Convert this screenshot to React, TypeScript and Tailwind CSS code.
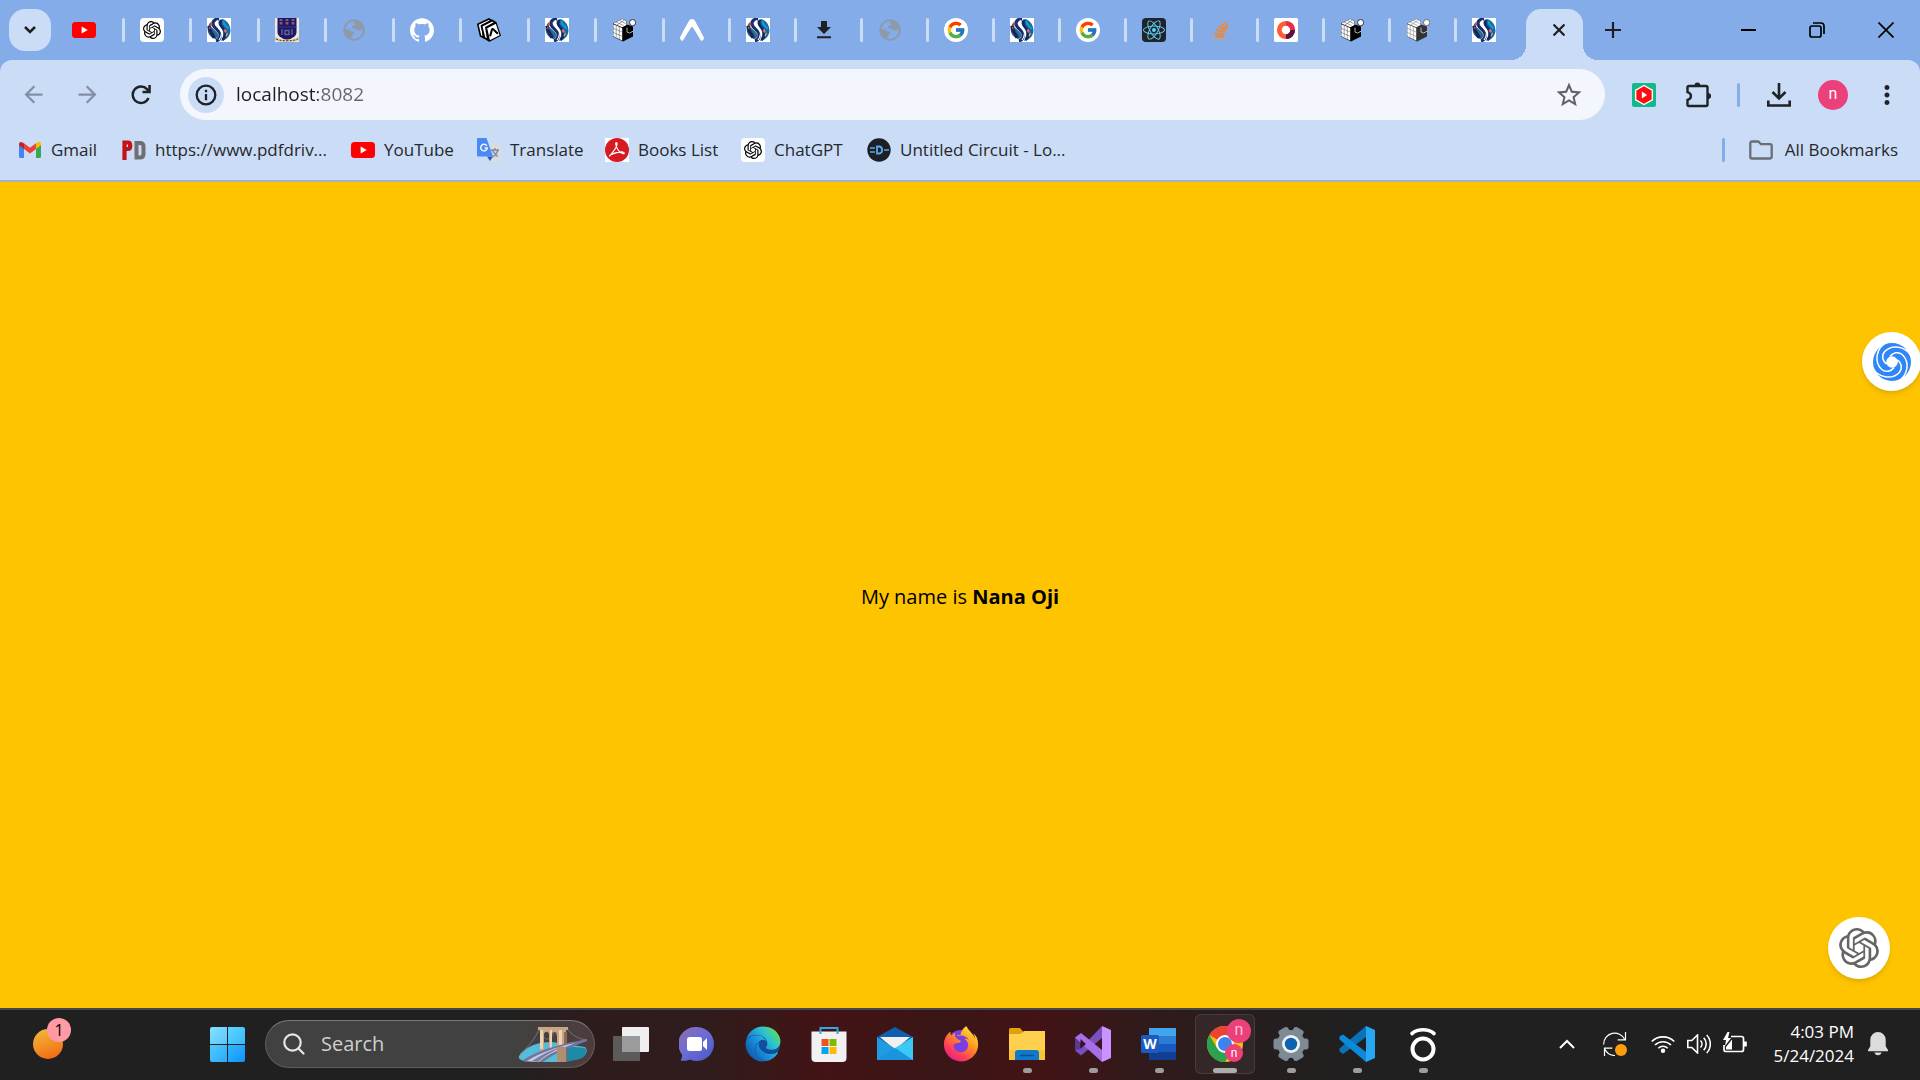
import React from "react";
import { MdArrowBack, MdArrowForward, MdStarBorder, MdMoreVert } from "react-icons/md";
import { SiOpenai, SiGithub, SiExpo } from "react-icons/si";
import { FcGoogle } from "react-icons/fc";
import { FaReact, FaEdge, FaFirefoxBrowser } from "react-icons/fa";

/* ---------- site icons ---------- */

const YouTube = () => (
  <svg viewBox="0 0 24 24" className="size-6" aria-hidden="true">
    <rect x="0" y="4" width="24" height="16" rx="3.500" fill="#ff0000" />
    <path d="M9.600 8.400v7.200l6.200-3.600z" fill="#fff" />
  </svg>
);

const ChatGpt = () => (
  <span className="flex size-6 items-center justify-center rounded bg-white text-black">
    <SiOpenai className="size-[18px]" />
  </span>
);

const Swirl = () => (
  <svg viewBox="0 0 24 24" className="size-6" aria-hidden="true">
    <rect width="24" height="24" fill="#fff" />
    <path d="M13 1C6 0 3 4 4 8c1 3 6 5 7 8s-1 5-3 5C3 19 0 15 .8 10 1.500 5 6 .8 13 1z" fill="#1f6f8f" />
    <path d="M12 1C7 1 5 4 6.500 7.500c1.200 3 6 5 6.500 8.500.4 3-1 6-4 7" fill="none" stroke="#1b2b6b" strokeWidth="3.200" />
    <path d="M2 8c0 6 4 7 5 12" fill="none" stroke="#1b2460" strokeWidth="3.400" />
    <path d="M15 1C10 3 11 6 13.500 9c3 3.500 4 8 .5 14 5-.6 9-4.500 9.500-10C23.500 7 20 2 15 1z" fill="#1268a8" />
    <path d="M14 2c-2 4 0 6 2.500 9s2 8-1 11" fill="none" stroke="#16245f" strokeWidth="2.600" />
    <path d="M17 3c-1.500 3 3 5 4.500 8" fill="none" stroke="#1b9ac0" strokeWidth="2.200" />
    <path d="M10.500 2C8 6 10 8 12.500 11s2.500 7-.5 11" fill="none" stroke="#fff" strokeWidth="1.100" />
    <path d="M3 5.500l2 1.500M2 9.500l1.500 1" stroke="#e0402e" strokeWidth="1.600" />
    <path d="M17.500 11.500l1.500 3" stroke="#ee6a75" strokeWidth="2.200" />
    <path d="M20.500 15l-1.500 3" stroke="#f0b43a" strokeWidth="1.200" />
  </svg>
);

const Crest = () => (
  <svg viewBox="0 0 24 24" className="size-6" aria-hidden="true">
    <rect width="24" height="24" fill="#efe9dc" />
    <path d="M2.500 0h19v14c0 4-4 6.500-9.500 8-5.500-1.500-9.500-4-9.500-8z" fill="#1c1664" />
    <path d="M2.500 9h19" stroke="#3d3590" strokeWidth="1" />
    <path d="M7 11v6M17 11v6M10 12.500h4v4h-4z" stroke="#6a6490" strokeWidth="1.400" fill="none" />
    <path d="M6 1v5.500M12 1v5.500M18 1v5.500" stroke="#8d5a63" strokeWidth="2.800" />
    <path d="M4.500 3.500h3M10.500 3.500h3M16.500 3.500h3" stroke="#1c1664" strokeWidth="1" />
    <path d="M0 18.500c4 3 8 3 12 3s8 0 12-3v3.500c-4 2-8 2-12 2s-8 0-12-2z" fill="#dccba5" />
    <path d="M1 21c4 1.700 7 1.700 11 1.700s7 0 11-1.700" stroke="#4b3324" strokeWidth="1" fill="none" strokeDasharray="2 1.500" />
  </svg>
);

const Snack = () => (
  <svg viewBox="0 0 24 24" className="size-6" aria-hidden="true">
    <path d="M.8 6.200L12 1l2.500 1.500L5 7.500l1.500 12L3.500 18z" fill="#fff" stroke="#000" strokeWidth="1.600" />
    <path d="M4.500 8L15.500 2.500l2.700 2L9 9.500l2 12.500-3.500-2z" fill="#fff" stroke="#000" strokeWidth="1.800" />
    <path d="M9.500 10l9.700-5L23.300 17.500 12.500 23z" fill="#fff" stroke="#000" strokeWidth="1.200" />
    <path d="M13.300 17.500l1.700-6c.2-.7.8-.8 1.300-.3l4 4" fill="none" stroke="#000" strokeWidth="2" strokeLinecap="round" />
  </svg>
);

const Cube = ({ faded = false }: { faded?: boolean }) => (
  <svg viewBox="0 0 24 24" className="size-6" aria-hidden="true">
    <path d="M10.500.8l4.500 2.200v3.500l6 2v10l-10 5-10-5v-13z" fill={faded ? "#333" : "#000"} />
    <path d="M1.300 6.200l8.900 3.900v12.400L1.300 18.200z" fill="#fff" />
    <path d="M1.300 5.400l9-4.300 4.200 2v4l-4.200 2.200z" fill="#fff" />
    <path d="M1 10.200l9.500 4M1 14.300l9.500 4.200M4.200 7v12.500M7.300 8.500v12.700M4 4l7.500 3.500M7.500 2.500l6 3M5 7l7.500-5" stroke={faded ? "#888" : "#666"} strokeWidth=".6" fill="none" />
    <path d="M15 9.500v4.500l2.500 1 4-2" stroke="#ddd" strokeWidth=".8" fill="none" />
    <circle cx="20.600" cy="4.600" r="3.100" fill="#fff" stroke={faded ? "#555" : "#111"} strokeWidth=".8" />
  </svg>
);

const Globe = () => (
  <svg viewBox="0 0 24 24" className="size-6" aria-hidden="true">
    <circle cx="12" cy="12" r="9.800" fill="none" stroke="#8f99a8" strokeWidth="1.800" />
    <path d="M12.500 2.500C11 4 11.500 5.500 13.500 6c-1 1.500-2 1.800-3.500 2 .5 2 1 2.800 3 3 1.500 0 3 .5 3.300 2 1.200-.4 3-.6 5.200-2C21 6 17 2.500 12.500 2.500zM2.500 11c3 0 5.500.8 7 2.500 1.500 0 3 1 2.500 2.500-1.500.5-2.500 1.500-3 4.500C5 19 2.300 15.500 2.500 11z" fill="#8f99a8" />
  </svg>
);

const DownloadPage = () => (
  <svg viewBox="0 0 24 24" className="size-6" aria-hidden="true">
    <path d="M9 3h6v6h4l-7 7-7-7h4zM5 18.300h14v2H5z" fill="#202124" />
  </svg>
);

const Google = () => (
  <span className="flex size-6 items-center justify-center rounded-full bg-white">
    <FcGoogle className="size-5" />
  </span>
);

const ReactTile = () => (
  <span className="flex size-6 items-center justify-center rounded-sm bg-[#20232a] text-[#5ed3f3]">
    <FaReact className="size-[22px]" />
  </span>
);

const Stack = () => (
  <svg viewBox="0 0 24 24" className="size-6" fill="none" aria-hidden="true">
    <path d="M4.700 15v6h13.500v-6" stroke="#a9a9ae" strokeWidth="1.300" />
    <path d="M7 18.500h9M7.200 15.500l9 .8M8.200 11.900l8.500 2.300M10.300 8.200l7.300 4.300M13.300 5.300l5 6.200M17.300 3.500l2.200 7" stroke="#f5852f" strokeWidth="1.800" />
  </svg>
);

const Ring = () => (
  <svg viewBox="0 0 24 24" className="size-6" aria-hidden="true">
    <rect width="24" height="24" rx="1.500" fill="#fff" />
    <circle cx="12" cy="12" r="6.700" fill="none" stroke="#ff5a36" strokeWidth="4.800" />
    <path d="M12 5.300a6.700 6.700 0 0 1 6.700 6.700" fill="none" stroke="#e2304a" strokeWidth="4.800" />
    <path d="M18.700 12A6.700 6.700 0 0 1 12 18.700" fill="none" stroke="#5a1245" strokeWidth="4.800" />
  </svg>
);

const Gmail = () => (
  <svg viewBox="0 0 24 24" className="size-6" aria-hidden="true">
    <path d="M1 6.500v12A1.500 1.500 0 0 0 2.500 20H6V10z" fill="#4285f4" />
    <path d="M23 6.500v12a1.500 1.500 0 0 1-1.500 1.500H18V10z" fill="#34a853" />
    <path d="M18 5.500V11l5-3.800V6c0-2.200-2.300-2.800-3.600-1.600z" fill="#fbbc04" />
    <path d="M6 11V5.200l6 4.600 6-4.600V11l-6 4.600z" fill="#ea4335" />
    <path d="M1 6v1.200L6 11V5.500L4.600 4.400C3.200 3.300 1 4 1 6z" fill="#c5221f" />
  </svg>
);

const PdfDrive = () => (
  <svg viewBox="0 0 24 24" className="size-6" aria-hidden="true">
    <path d="M2.500 22V4.500H6c3 0 3 6.500 0 6.500H4" fill="none" stroke="#c01218" strokeWidth="4.200" />
    <path d="M14.500 5h3.500c2.500 0 3.500 1 3.500 3.500v7.500c0 2.500-1 3.500-3.500 3.500h-3.500z" fill="none" stroke="#6d6f72" strokeWidth="4" />
  </svg>
);

const Translate = () => (
  <svg viewBox="0 0 24 24" className="size-6" aria-hidden="true">
    <path d="M9 5.500h14a1 1 0 0 1 1 1V23a1 1 0 0 1-1 1H13z" fill="#d9dce0" />
    <path d="M14 12h8M18 10v2M15.500 12c1 3 3 5 5.500 6.500M21 12c-1 3.500-3 5.500-5.500 7" stroke="#7d8fa0" strokeWidth="1.300" fill="none" />
    <path d="M10 18.500h6L13 23z" fill="#3553b5" />
    <path d="M1 0h8.500L16 18.500H1a1 1 0 0 1-1-1V1a1 1 0 0 1 1-1z" fill="#4a8af4" />
    <path d="M9.800 7.800A3.300 3.300 0 1 0 10.300 10H7.500" fill="none" stroke="#eef3fd" strokeWidth="1.500" />
  </svg>
);

const Acrobat = () => (
  <svg viewBox="0 0 24 24" className="size-6" aria-hidden="true">
    <rect width="24" height="24" fill="#fff" />
    <circle cx="12" cy="12" r="12" fill="#d71920" />
    <path d="M5 17.800c2-3.300 7-7.300 7-12 0-1.500-1.500-1.500-1.300.2.500 4.500 4 9 7.500 9.700 1.500.2 1.500-1.500-.5-1.700-4-.3-8 1-12 2.700-1.300.8-1.500 1.700-.7 1.100z" fill="none" stroke="#fff" strokeWidth="1.200" />
  </svg>
);

const Circuit = () => (
  <svg viewBox="0 0 24 24" className="size-6" aria-hidden="true">
    <circle cx="12" cy="12" r="11.700" fill="#1c2024" />
    <path d="M3 10h5M3 14h5M17 12h5" fill="none" stroke="#58a9ec" strokeWidth="1.500" />
    <path d="M10 8.500v7h2.500c3.500-.8 3.500-6.200 0-7z" fill="none" stroke="#58a9ec" strokeWidth="1.800" />
  </svg>
);

const Info = () => (
  <svg viewBox="0 0 24 24" className="size-6" fill="none" stroke="#1f2226" strokeWidth="2.300" aria-hidden="true">
    <circle cx="12" cy="12" r="9.300" />
    <path d="M12 11v6.200M12 6.800v2.400" />
  </svg>
);

const Puzzle = () => (
  <svg viewBox="0 0 26 26" className="size-[26px]" fill="none" aria-hidden="true">
    <path d="M2.500 5.500a1.500 1.500 0 0 1 1.500-1.500h17a1.500 1.500 0 0 1 1.500 1.500v17a1.500 1.500 0 0 1-1.500 1.500H4a1.500 1.500 0 0 1-1.500-1.500v-4.600c4.600-1.300 4.600-6.500 0-7.800z" stroke="#1f2226" strokeWidth="2.400" />
    <path d="M9.500 3.500a2.900 2.900 0 0 1 5.800 0zM23 11a3 3 0 0 1 0 6.200z" fill="#1f2226" />
  </svg>
);

/* ---------- taskbar icons ---------- */

const Bridge = () => (
  <svg viewBox="0 0 70 36" className="h-9 w-[70px]" aria-hidden="true">
    <path d="M1 30C8 20 20 16 34 16l33 5c5 6-2 12-11 13l-16 2H12C4 35 0 33 1 30z" fill="#55bcd9" />
    <path d="M47 20l20 2c4 6-2 11-10 12l-10 2z" fill="#1f89a8" />
    <path d="M22 2C17 12 10 22 2 28M49 2c5 8 12 11 20 12M22 4c4 12 11 12 15 0M37 4c3 12 9 12 11 0" fill="none" stroke="#70737d" strokeWidth="1" />
    <path d="M20 1h30v3h-2v32h-9V8c-1-3-4-3-5 0v19h-3V8c-1-3-4-3-5 0v17h-4V4h-2z" fill="#c9a583" />
    <path d="M22 4h3v19h-3zM32 4h2v20h-2zM41 4h3v32h-3z" fill="#ecd3b6" />
    <path d="M46 6h3v30h-3z" fill="#8c6b55" />
    <path d="M5 34C22 23 44 18 69 13v2C54 21 38 26 25 36H7z" fill="#70759a" />
    <path d="M9 35c14-9 30-14 48-18-14 6-26 10-36 19z" fill="#c7cbe0" />
    <path d="M14 35c12-8 22-12 34-16-10 5-20 9-28 17z" fill="#7b80a5" />
    <path d="M39 21h9v15h-9z" fill="#b18e72" />
  </svg>
);

const TaskView = () => (
  <svg viewBox="0 0 36 36" className="size-9" aria-hidden="true">
    <rect x="9" y="1" width="27" height="25" rx="1" fill="#efefef" />
    <rect x="0" y="10" width="27" height="25" rx="1" fill="#5d5a5a" />
    <path d="M9 10h18v16H9z" fill="#9b9b9b" />
  </svg>
);

const Chat = () => (
  <svg viewBox="0 0 36 36" className="size-9" aria-hidden="true">
    <defs>
      <linearGradient id="chat-fill" x1="0" y1="0" x2="1" y2="1">
        <stop offset="0" stopColor="#8f6fb0" />
        <stop offset=".5" stopColor="#6a6cd6" />
        <stop offset="1" stopColor="#4a56c8" />
      </linearGradient>
    </defs>
    <path d="M18 1a17 17 0 1 1-7 32.500c-3 1.500-7 1.500-9.500 1 1-1.500 2-3.500 1.500-6A17 17 0 0 1 18 1z" fill="url(#chat-fill)" />
    <rect x="8" y="11" width="15" height="14" rx="2.500" fill="#fff" />
    <path d="M24 16l4-4v12l-4-4z" fill="#fff" />
  </svg>
);

const Edge = () => (
  <>
    <svg className="absolute size-0" aria-hidden="true">
      <defs>
        <linearGradient id="edge-fill" x1="1" y1="0.200" x2="0.100" y2="0.900">
          <stop offset="0" stopColor="#62e04f" />
          <stop offset=".3" stopColor="#2dc3d0" />
          <stop offset=".6" stopColor="#1b8fdc" />
          <stop offset="1" stopColor="#0c56a8" />
        </linearGradient>
        <linearGradient id="fox-fill" x1=".9" y1="0" x2=".2" y2="1">
          <stop offset="0" stopColor="#fff04a" />
          <stop offset=".4" stopColor="#ff9a1f" />
          <stop offset=".75" stopColor="#ff3f55" />
          <stop offset="1" stopColor="#e3189b" />
        </linearGradient>
      </defs>
    </svg>
    <span className="flex size-[34px] items-center justify-center rounded-full bg-[#0f4f9c]">
      <FaEdge className="size-9 shrink-0" fill="url(#edge-fill)" />
    </span>
  </>
);

const Firefox = () => (
  <span className="flex size-7 items-center justify-center rounded-full bg-[#7a3fe0]">
    <FaFirefoxBrowser className="size-9 shrink-0" fill="url(#fox-fill)" />
  </span>
);

const Store = () => (
  <svg viewBox="0 0 36 36" className="size-9" aria-hidden="true">
    <path d="M.5 5.500h35V32a4 4 0 0 1-4 4h-27a4 4 0 0 1-4-4z" fill="#f1f1f1" />
    <path d="M9.500 8V2h17v6" fill="none" stroke="#2ba9e8" strokeWidth="2" />
    <path d="M10.500 13h7v7h-7z" fill="#f25022" />
    <path d="M18.500 13h7v7h-7z" fill="#7fba00" />
    <path d="M10.500 21h7v7h-7z" fill="#00a4ef" />
    <path d="M18.500 21h7v7h-7z" fill="#ffb900" />
  </svg>
);

const Mail = () => (
  <svg viewBox="0 0 36 36" className="size-9" aria-hidden="true">
    <path d="M0 11L18 1l18 10v5H0z" fill="#0f5fae" />
    <path d="M3 11h30L18 24z" fill="#f0f0f0" />
    <path d="M0 11l36 23H0z" fill="#1f9be2" />
    <path d="M36 11v23H33L18 22z" fill="#3cc8f4" />
    <path d="M18 22l18 12H0z" fill="#1c93dd" />
  </svg>
);

const Explorer = () => (
  <svg viewBox="0 0 36 36" className="size-9" aria-hidden="true">
    <path d="M0 3.500A1.500 1.500 0 0 1 1.500 2H11l3 3.500L11 9H0z" fill="#e0a10c" />
    <path d="M0 8h11l4-3h21v29H0z" fill="#fdd04e" />
    <path d="M0 24h36v10H0z" fill="#f9c435" />
    <path d="M6 34V27a3 3 0 0 1 3-3h18a3 3 0 0 1 3 3v7z" fill="#0f79cc" />
    <path d="M11 29.500h14" stroke="#0a4f92" strokeWidth="1.500" />
  </svg>
);

const VisualStudio = () => (
  <svg viewBox="0 0 36 36" className="size-9" aria-hidden="true">
    <path d="M0 11.500L5.500 9v18L0 24.500z" fill="#5c3a94" />
    <path d="M27 0v12L6 29.500 0 24.500 5 23z" fill="#7c4fc0" />
    <path d="M0 11.500L6 7l21 17v12z" fill="#a66fe8" />
    <path d="M5.500 13v9.500L11 18z" fill="#38122a" />
    <path d="M27 0l9 4v28l-9 4z" fill="#ca93ff" />
  </svg>
);

const Word = () => (
  <svg viewBox="0 0 36 36" className="size-9" aria-hidden="true">
    <path d="M8 2h27v8H8z" fill="#41a5ee" />
    <path d="M8 10h27v8H8z" fill="#2b7cd3" />
    <path d="M8 18h27v8H8z" fill="#185abd" />
    <path d="M8 26h27v8H8z" fill="#103f91" />
    <rect x="0" y="9" width="18" height="18" rx="1.500" fill="#1a5bbf" />
    <text x="9" y="23" textAnchor="middle" fontSize="14" fontWeight="700" fill="#fff">W</text>
  </svg>
);

const Chrome = () => (
  <svg viewBox="0 0 36 36" className="size-9" aria-hidden="true">
    <circle cx="18" cy="18" r="18" fill="#fbbc05" />
    <path d="M18 18L2.400 9A18 18 0 0 1 33.600 9z" fill="#ea4335" />
    <path d="M18 9h15.600L25 14z" fill="#ea4335" />
    <path d="M2.400 9A18 18 0 0 0 18 36l8-13.500-16-.5z" fill="#2ba24c" />
    <circle cx="18" cy="18" r="9" fill="#fff" />
    <circle cx="18" cy="18" r="7" fill="#3d82f1" />
  </svg>
);

const Gear = () => (
  <svg viewBox="0 0 36 36" className="size-9" aria-hidden="true">
    <g fill="#7e8a94">
      <circle cx="18" cy="18" r="14" />
      {[30, 90, 150].map((a) => (
        <rect key={a} x="12.500" y="0.500" width="11" height="35" rx="2.500" transform={`rotate(${a} 18 18)`} />
      ))}
    </g>
    <circle cx="18" cy="18" r="9" fill="#f0f2f4" />
    <circle cx="18" cy="18" r="6.200" fill="#0f62b0" />
  </svg>
);

const VsCode = () => (
  <svg viewBox="0 0 36 36" className="size-9" aria-hidden="true">
    <path d="M27 0v11L4 28 .5 25.500v-3z" fill="#0a72b8" />
    <path d="M.5 10.500L4 8.500 27 26v10L.5 13.500z" fill="#0a8ad8" />
    <path d="M27 0l9 4v28l-9 4z" fill="#27a7f2" />
  </svg>
);

const TabletDriver = () => (
  <svg viewBox="0 0 36 36" className="size-9" fill="none" stroke="#fff" aria-hidden="true">
    <circle cx="18" cy="23" r="10.500" strokeWidth="4" />
    <path d="M7 7.500c6-5 16-5 22 0" strokeWidth="3.600" strokeLinecap="round" />
  </svg>
);

const SwirlBadge = () => (
  <svg viewBox="-20 -20 40 40" className="size-10" aria-hidden="true">
    <circle r="19" fill="#2f86f6" />
    {[10, 100, 190, 280].map((a) => (
      <g key={a} transform={`rotate(${a})`}>
        <path d="M20-4C18-9 15-13 11-16L20-18z" fill="#fff" />
        <path d="M18-9C11-18-3-18-9-9-12-4-9 1-5 3" fill="none" stroke="#fff" strokeWidth="1.500" />
      </g>
    ))}
    <circle r="5.800" fill="#fff" />
  </svg>
);

/* ---------- data ---------- */

type Tab = { name: string; icon: React.ReactNode; width: string };

const wideA = "w-[67px]";
const wideB = "w-[68px]";
const narrow = "w-[66px]";

const tabs: Tab[] = [
  { name: "YouTube", icon: <YouTube />, width: wideB },
  { name: "ChatGPT", icon: <ChatGpt />, width: wideA },
  { name: "Student portal", icon: <Swirl />, width: wideB },
  { name: "University", icon: <Crest />, width: wideA },
  { name: "New site", icon: <Globe />, width: wideB },
  { name: "GitHub", icon: <SiGithub className="size-6 text-white" />, width: wideA },
  { name: "Snack", icon: <Snack />, width: wideB },
  { name: "Student portal", icon: <Swirl />, width: wideA },
  { name: "Cube", icon: <Cube />, width: wideB },
  { name: "Expo", icon: <SiExpo className="size-6 text-white" />, width: narrow },
  { name: "Student portal", icon: <Swirl />, width: narrow },
  { name: "Downloads", icon: <DownloadPage />, width: narrow },
  { name: "New site", icon: <Globe />, width: narrow },
  { name: "Google", icon: <Google />, width: narrow },
  { name: "Student portal", icon: <Swirl />, width: narrow },
  { name: "Google", icon: <Google />, width: narrow },
  { name: "React", icon: <ReactTile />, width: narrow },
  { name: "Stack Overflow", icon: <Stack />, width: narrow },
  { name: "Ring", icon: <Ring />, width: narrow },
  { name: "Cube", icon: <Cube />, width: narrow },
  { name: "Cube", icon: <Cube faded />, width: narrow },
];

const bookmarks = [
  { label: "Gmail", icon: <Gmail />, width: "w-[104px]" },
  { label: "https://www.pdfdriv...", icon: <PdfDrive />, width: "w-[229px]" },
  { label: "YouTube", icon: <YouTube />, width: "w-[126px]" },
  { label: "Translate", icon: <Translate />, width: "w-[128px]" },
  { label: "Books List", icon: <Acrobat />, width: "w-[136px]" },
  { label: "ChatGPT", icon: <ChatGpt />, width: "w-[126px]" },
  { label: "Untitled Circuit - Lo...", icon: <Circuit />, width: "w-[228px]" },
];

type TaskbarApp = { name: string; icon: React.ReactNode; state?: "open" | "active" };

const apps: TaskbarApp[] = [
  { name: "Task view", icon: <TaskView /> },
  { name: "Chat", icon: <Chat /> },
  { name: "Edge", icon: <Edge /> },
  { name: "Store", icon: <Store /> },
  { name: "Mail", icon: <Mail /> },
  { name: "Firefox", icon: <Firefox /> },
  { name: "File Explorer", icon: <Explorer />, state: "open" },
  { name: "Visual Studio", icon: <VisualStudio />, state: "open" },
  { name: "Word", icon: <Word />, state: "open" },
  { name: "Chrome", icon: <Chrome />, state: "active" },
  { name: "Settings", icon: <Gear />, state: "open" },
  { name: "VS Code", icon: <VsCode />, state: "open" },
  { name: "Tablet driver", icon: <TabletDriver />, state: "open" },
];

/* ---------- page parts ---------- */

function TabStrip() {
  return (
    <div className="flex h-[60px] items-center pl-[9px]">
      <button aria-label="Search tabs" className="flex size-[42px] shrink-0 items-center justify-center rounded-2xl bg-[#cbdcf6]">
        <svg viewBox="0 0 12 8" className="h-2 w-3" fill="none" stroke="#1f1f1f" strokeWidth="2.500" aria-hidden="true">
          <path d="M1 1l5 5 5-5" />
        </svg>
      </button>
      <div className="ml-[6px] flex items-center">
        {tabs.map((tab, i) => (
          <button key={i} aria-label={tab.name} className={`flex h-6 items-center justify-between pl-[15px] ${tab.width}`}>
            {tab.icon}
            <span className="h-6 w-[3px] rounded-sm bg-[#cbdcf6]" />
          </button>
        ))}
        <button aria-label="Student portal" className="flex h-6 w-[69px] items-center pl-[15px]">
          <Swirl />
        </button>
      </div>
      <div className="relative flex h-[51px] w-[57px] items-center justify-end self-end rounded-t-[15px] bg-[#cbdcf6] pr-3 pb-[9px] before:absolute before:bottom-0 before:-left-[15px] before:size-[15px] before:bg-[radial-gradient(circle_at_0_0,transparent_15px,#cbdcf6_15px)] after:absolute after:-right-[15px] after:bottom-0 after:size-[15px] after:bg-[radial-gradient(circle_at_100%_0,transparent_15px,#cbdcf6_15px)]">
        <button aria-label="Close tab" className="flex size-6 items-center justify-center">
          <svg viewBox="0 0 12 12" className="size-3" stroke="#1f1f1f" strokeWidth="2.200" aria-hidden="true">
            <path d="M.5.5l11 11M11.500.5l-11 11" />
          </svg>
        </button>
      </div>
      <button aria-label="New tab" className="ml-[9px] flex size-[42px] items-center justify-center">
        <svg viewBox="0 0 16 16" className="size-4" stroke="#1f1f1f" strokeWidth="2.200" aria-hidden="true">
          <path d="M8 0v16M0 8h16" />
        </svg>
      </button>
      <div className="ml-auto flex h-full items-center">
        <button aria-label="Minimize" className="flex h-full w-[69px] items-center justify-center">
          <span className="h-0.5 w-[15px] bg-black" />
        </button>
        <button aria-label="Restore" className="flex h-full w-[68px] items-center justify-center">
          <svg viewBox="0 0 16 16" className="size-4" fill="none" stroke="#000" strokeWidth="1.700" aria-hidden="true">
            <rect x="1" y="4" width="11" height="11" rx="2" />
            <path d="M4 1h8a3 3 0 0 1 3 3v8" />
          </svg>
        </button>
        <button aria-label="Close" className="flex h-full w-[69px] items-center justify-center">
          <svg viewBox="0 0 16 16" className="size-4" stroke="#000" strokeWidth="1.700" aria-hidden="true">
            <path d="M.5.5l15 15M15.500.5l-15 15" />
          </svg>
        </button>
      </div>
    </div>
  );
}

function Toolbar() {
  const button = "flex h-[51px] w-[54px] shrink-0 items-center justify-center";
  return (
    <div className="flex items-center rounded-t-xl bg-[#cbdcf6] px-[6px] pt-[9px]">
      <button aria-label="Back" className={button}>
        <MdArrowBack className="size-[27px] text-[#828fa6]" />
      </button>
      <button aria-label="Forward" className={button}>
        <MdArrowForward className="size-[27px] text-[#828fa6]" />
      </button>
      <button aria-label="Reload" className={button}>
        <svg viewBox="0 0 20 20" className="size-5" fill="none" aria-hidden="true">
          <path d="M17.500 13A8.200 8.200 0 1 1 16 4.200l2 2.300" stroke="#1f2226" strokeWidth="2.500" />
          <path d="M19.800 0v8.200h-8.300V5.800h5.800V0z" fill="#1f2226" />
        </svg>
      </button>
      <div className="ml-3 flex h-[51px] flex-1 items-center rounded-full bg-[#f3f7fd] pr-[21px] pl-2">
        <button aria-label="Site information" className="flex size-9 items-center justify-center rounded-full bg-[#cbdcf6]">
          <Info />
        </button>
        <input
          aria-label="Address"
          defaultValue="localhost:8082"
          className="ml-3 flex-1 bg-[linear-gradient(90deg,#1f1f1f_82px,#63676d_82px)] bg-clip-text text-[19px] text-transparent outline-none"
        />
        <button aria-label="Bookmark this page">
          <MdStarBorder className="size-[30px] text-[#5f6368]" />
        </button>
      </div>
      <button aria-label="Video extension" className={`ml-3 ${button}`}>
        <svg viewBox="0 0 24 24" className="size-6" aria-hidden="true">
          <rect width="24" height="24" rx="2" fill="#15b88a" />
          <path d="M12 2.500l8.300 4.700v9.600L12 21.500l-8.300-4.700V7.200z" fill="#ff0b12" stroke="#fff" strokeWidth="1.300" />
          <path d="M9.800 8.600v6.800l5.400-3.400z" fill="#fff" />
        </svg>
      </button>
      <button aria-label="Extensions" className={button}>
        <Puzzle />
      </button>
      <span className="ml-3 h-6 w-[3px] rounded-sm bg-[#84ace9]" />
      <button aria-label="Downloads" className={`ml-3 ${button}`}>
        <svg viewBox="0 0 24 24" className="size-6" fill="none" stroke="#1f2226" strokeWidth="2.600" aria-hidden="true">
          <path d="M12 0v15M5.500 9l6.500 6.500L18.500 9M1.300 17.500v5h21.400v-5" />
        </svg>
      </button>
      <button aria-label="Profile" className={button}>
        <span className="flex size-[30px] items-center justify-center rounded-full bg-[#ec407a] pb-px font-[Roboto] text-base text-white">n</span>
      </button>
      <button aria-label="Menu" className={button}>
        <MdMoreVert className="size-[30px] text-[#1f2226]" />
      </button>
    </div>
  );
}

function Bookmarks() {
  return (
    <nav className="flex h-[62px] items-center border-b-2 border-[#a3b1c7] bg-[#cbdcf6] pr-[22px] pl-[18px] text-[17px] text-[#25282d]">
      {bookmarks.map((b) => (
        <a key={b.label} href="#" className={`flex shrink-0 items-center gap-[9px] whitespace-nowrap ${b.width}`}>
          {b.icon}
          {b.label}
        </a>
      ))}
      <span className="ml-auto h-6 w-[3px] rounded-sm bg-[#84ace9]" />
      <button className="ml-6 flex items-center gap-3 whitespace-nowrap">
        <svg viewBox="0 0 24 20" className="h-5 w-6" fill="none" stroke="#6a6e74" strokeWidth="2.300" aria-hidden="true">
          <path d="M1.300 3v14a1.500 1.500 0 0 0 1.500 1.500h18.400a1.500 1.500 0 0 0 1.500-1.500V5.700a1.500 1.500 0 0 0-1.500-1.500H12L9.300 1.500H2.800A1.500 1.500 0 0 0 1.300 3z" />
        </svg>
        All Bookmarks
      </button>
    </nav>
  );
}

function Taskbar() {
  return (
    <footer className="flex h-[72px] items-center border-t-2 border-[#484646] bg-[#202020] bg-[linear-gradient(90deg,#202020_26%,#2e1c1c_31%,#301c1c_37%,#431315_43%,#3a1616_49%,#431315_54%,#321a1b_59%,#251e1e_66%,#202020_71%)] pb-0.5">
      <button aria-label="Weather" className="relative ml-[33px] size-[30px] rounded-full bg-linear-160 from-[#eebc38] to-[#f2600c]">
        <span className="absolute -top-[11px] left-[14px] flex size-6 items-center justify-center rounded-full bg-[#ff99a4] text-base text-black">1</span>
      </button>
      <button aria-label="Start" className="ml-[147px] grid size-[35px] shrink-0 grid-cols-2 gap-px">
        <span className="rounded-tl-xs bg-linear-135 from-[#86e0ff] to-[#58c6fb]" />
        <span className="rounded-tr-xs bg-linear-135 from-[#5cd6ff] to-[#38b8fa]" />
        <span className="rounded-bl-xs bg-linear-135 from-[#4fcbff] to-[#27aaf9]" />
        <span className="rounded-br-xs bg-linear-135 from-[#33b6ff] to-[#0b93fb]" />
      </button>
      <label className="ml-5 flex h-12 w-[330px] shrink-0 items-center rounded-full border border-white/15 border-t-white/30 bg-white/15 pr-[6px] pl-[17px]">
        <svg viewBox="0 0 22 22" className="size-[22px] shrink-0" fill="none" stroke="#e6e6e6" strokeWidth="2.200" strokeLinecap="round" aria-hidden="true">
          <circle cx="9.500" cy="9.500" r="8.200" />
          <path d="M15.500 15.500l5 5" />
        </svg>
        <input aria-label="Search" placeholder="Search" className="ml-4 w-0 flex-1 bg-transparent text-xl text-white outline-none placeholder:text-[#cfcfcf]" />
        <Bridge />
      </label>
      <div className="ml-[3px] flex">
        {apps.map((app) => (
          <button key={app.name} aria-label={app.name} className="flex w-[66px] justify-center">
            <span
              className={`relative flex size-[60px] items-center justify-center rounded-md ${
                app.state === "active" ? "border border-white/10 bg-white/5" : ""
              }`}
            >
              {app.icon}
              {app.state === "open" && <span className="absolute bottom-px h-[5px] w-[9px] rounded-full bg-[#a19c9c]" />}
              {app.state === "active" && (
                <>
                  <span className="absolute bottom-0 h-[5px] w-6 rounded-full bg-[#adadad]" />
                  <span className="absolute top-1 right-[3px] flex size-6 items-center justify-center rounded-full bg-[#ec407a] pb-0.5 font-[Roboto] text-base leading-none text-[#fbc0d3]">n</span>
                  <span className="absolute right-[11px] bottom-[11px] flex size-[18px] items-center justify-center rounded-full bg-[#ec407a] pb-px font-[Roboto] text-xs leading-none text-white">n</span>
                </>
              )}
            </span>
          </button>
        ))}
      </div>
      <div className="ml-auto flex items-center pr-8 text-white">
        <button aria-label="Hidden icons" className="flex h-12 w-12 items-center justify-center">
          <svg viewBox="0 0 16 10" className="h-[10px] w-4" fill="none" stroke="#fff" strokeWidth="2" aria-hidden="true">
            <path d="M1 9l7-7 7 7" />
          </svg>
        </button>
        <button aria-label="Updates" className="flex h-12 w-12 items-center justify-center">
          <svg viewBox="0 0 24 24" className="size-6" fill="none" stroke="#fff" strokeWidth="1.200" aria-hidden="true">
            <path d="M.7 12.500a11 11 0 0 1 21-5M22.500 0v7.800h-7.800M1.500 24v-7.800h7.800M1.700 17c2 4 6 6.500 10.300 6.500" />
            <circle cx="18" cy="18" r="6" fill="#ff9d0a" stroke="none" />
          </svg>
        </button>
        <button aria-label="Network, volume and battery" className="flex h-12 items-center gap-3 px-3">
          <svg viewBox="0 0 24 18" className="h-[18px] w-6" fill="none" stroke="#fff" strokeWidth="1.600" aria-hidden="true">
            <path d="M.7 6.500a16 16 0 0 1 22.600 0M4 10a11.300 11.300 0 0 1 16 0M7.300 13.200a6.700 6.700 0 0 1 9.400 0" />
            <circle cx="12" cy="15.700" r="2.200" fill="#fff" stroke="none" />
          </svg>
          <svg viewBox="0 0 24 20" className="h-5 w-6" fill="none" stroke="#fff" strokeWidth="1.600" aria-hidden="true">
            <path d="M.8 6.500h4L10.500 1v18l-5.700-5.500h-4zM13.500 6.500a5 5 0 0 1 0 7M16.700 3.800a9 9 0 0 1 0 12.400M19.700 1a13 13 0 0 1 0 18" />
          </svg>
          <svg viewBox="0 0 24 20" className="h-5 w-6" fill="none" stroke="#fff" strokeWidth="1.700" overflow="visible" aria-hidden="true">
            <path d="M8 2.500h10.500a2 2 0 0 1 2 2v11a2 2 0 0 1-2 2H3a2 2 0 0 1-2-2V11" />
            <path d="M21 7.500h2.800v5H21zM3 15.500V13l6-7.500v10z" fill="#fff" stroke="none" />
            <path d="M4.500-2L0 6h3l-1 6 6-8H5l1.500-6z" fill="#fff" stroke="none" />
          </svg>
        </button>
        <button className="w-[95px] text-right text-[17px] leading-6 whitespace-nowrap">
          <span className="block">4:03 PM</span>
          <span className="block">5/24/2024</span>
        </button>
        <button aria-label="Notifications" className="ml-[14px]">
          <svg viewBox="0 0 20 24" className="h-6 w-5" fill="#dcdcdc" aria-hidden="true">
            <path d="M10 0a7.700 7.700 0 0 1 7.700 7.700v6.500L20 18v1.200H0V18l2.300-3.800V7.700A7.700 7.700 0 0 1 10 0zM6.500 20.500h7a3.600 3.600 0 0 1-7 0z" />
          </svg>
        </button>
      </div>
    </footer>
  );
}

export default function App() {
  return (
    <div className="flex min-h-screen flex-col overflow-hidden bg-[#84ace9] font-['Open_Sans',sans-serif]">
      <header>
        <TabStrip />
        <Toolbar />
        <Bookmarks />
      </header>
      <main className="relative flex flex-1 items-center justify-center bg-[#ffc400]">
        <p className="pt-1 text-xl text-black">
          My name is <b>Nana Oji</b>
        </p>
        <button aria-label="Assistant" className="absolute top-[150px] -right-px flex size-[59px] items-center justify-center rounded-full bg-white shadow-md">
          <SwirlBadge />
        </button>
        <button aria-label="Open ChatGPT" className="absolute right-[30px] bottom-[29px] flex size-[62px] items-center justify-center rounded-full bg-white text-[#666] shadow-md">
          <SiOpenai className="size-10" />
        </button>
      </main>
      <Taskbar />
    </div>
  );
}
